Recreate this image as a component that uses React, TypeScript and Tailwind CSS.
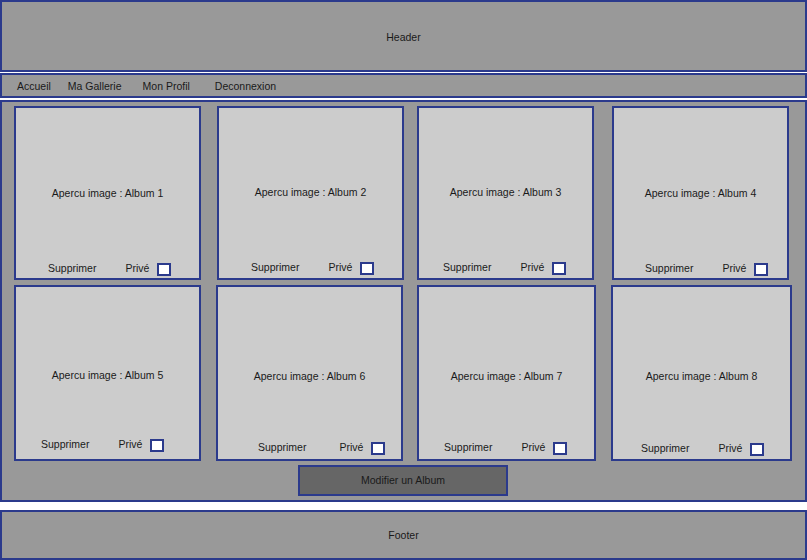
import React from 'react';

type Album = {
  n: number;
  w: string;
  ml: string;
  pl: string;
  mb: string;
  gap: string;
  pt: string;
};

const row1: Album[] = [
  { n: 1, w: 'w-[187px]', ml: 'ml-0', pl: 'pl-[32px]', mb: 'mb-[1px]', gap: 'ml-[29px]', pt: 'pt-[18px]' },
  { n: 2, w: 'w-[187px]', ml: 'ml-[16px]', pl: 'pl-[32px]', mb: 'mb-[2px]', gap: 'ml-[29px]', pt: 'pt-[18px]' },
  { n: 3, w: 'w-[177px]', ml: 'ml-[13px]', pl: 'pl-[24px]', mb: 'mb-[2px]', gap: 'ml-[29px]', pt: 'pt-[18px]' },
  { n: 4, w: 'w-[177px]', ml: 'ml-[18px]', pl: 'pl-[31px]', mb: 'mb-[1px]', gap: 'ml-[29px]', pt: 'pt-[18px]' },
];

const row2: Album[] = [
  { n: 5, w: 'w-[187px]', ml: 'ml-0', pl: 'pl-[25px]', mb: 'mb-[6px]', gap: 'ml-[29px]', pt: 'pt-[28px]' },
  { n: 6, w: 'w-[187px]', ml: 'ml-[15px]', pl: 'pl-[40px]', mb: 'mb-[3px]', gap: 'ml-[33px]', pt: 'pt-[26px]' },
  { n: 7, w: 'w-[179px]', ml: 'ml-[14px]', pl: 'pl-[25px]', mb: 'mb-[3px]', gap: 'ml-[29px]', pt: 'pt-[26px]' },
  { n: 8, w: 'w-[181px]', ml: 'ml-[15px]', pl: 'pl-[28px]', mb: 'mb-[2px]', gap: 'ml-[29px]', pt: 'pt-[26px]' },
];

const AlbumCard: React.FC<{ album: Album; h: string }> = ({ album, h }) => (
  <div className={`${album.w} ${album.ml} ${album.pt} ${h} shrink-0 bg-[#cccccc] border-2 border-[#2b3a8c] flex flex-col`}>
    <div className="flex-1 flex items-center justify-center">Apercu image : Album {album.n}</div>
    <div className={`h-4 flex items-center ${album.pl} ${album.mb}`}>
      <span>Supprimer</span>
      <span className={album.gap}>Privé</span>
      <span className="ml-[8px] w-[14px] h-[13px] bg-white border-2 border-[#2b3a8c]" />
    </div>
  </div>
);

export default function App() {
  return (
    <div className="w-[807px] h-[560px] bg-white flex flex-col text-[10.5px] text-[#1a1a1a] overflow-hidden font-['Liberation_Sans',Arial,sans-serif]">
      <header className="h-[72px] w-[807px] bg-[#999999] border-2 border-[#2b3a8c] flex items-center justify-center pt-[3px]">
        Header
      </header>

      <nav className="mt-[1px] h-[25px] w-[807px] bg-[#999999] border-2 border-[#2b3a8c] flex items-center pl-[15px] pt-[2px]">
        <span>Accueil</span>
        <span className="ml-[17px]">Ma Gallerie</span>
        <span className="ml-[21px]">Mon Profil</span>
        <span className="ml-[25px]">Deconnexion</span>
      </nav>

      <main className="mt-[2px] h-[402px] w-[807px] bg-[#999999] border-2 border-[#2b3a8c] pl-[12px] pt-[4px] flex flex-col">
        <div className="flex">
          {row1.map((a) => (
            <AlbumCard key={a.n} album={a} h="h-[174px]" />
          ))}
        </div>
        <div className="flex mt-[5px]">
          {row2.map((a) => (
            <AlbumCard key={a.n} album={a} h="h-[176px]" />
          ))}
        </div>
        <button className="mt-[4px] ml-[284px] w-[210px] h-[31px] bg-[#666666] border-2 border-[#2b3a8c] flex items-center justify-center pt-[1px]">
          Modifier un Album
        </button>
      </main>

      <footer className="mt-[8px] h-[50px] w-[807px] bg-[#999999] border-2 border-[#2b3a8c] flex items-center justify-center pt-[2px]">
        Footer
      </footer>
    </div>
  );
}
